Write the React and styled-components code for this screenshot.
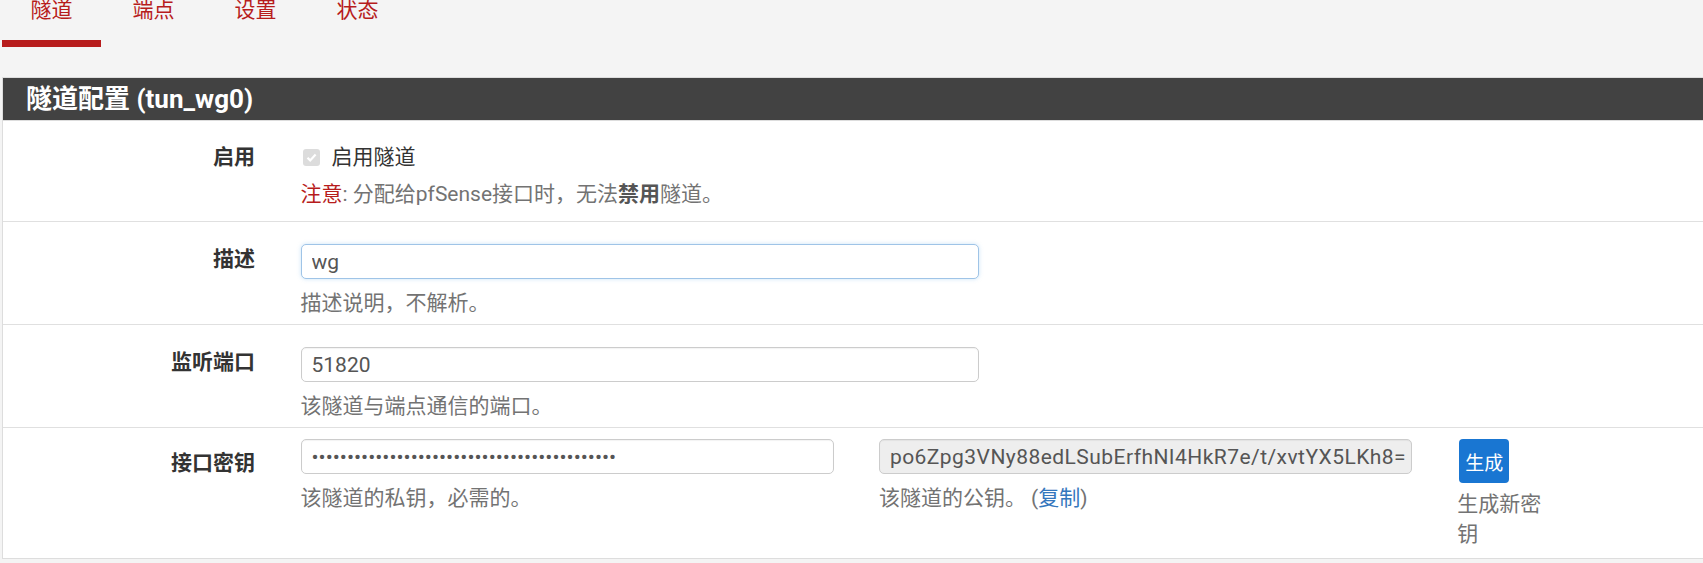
import React from 'react';
import styled, { createGlobalStyle } from 'styled-components';

const GlobalStyle = createGlobalStyle`
  html, body {
    margin: 0;
    padding: 0;
    background: #f4f4f4;
    overflow: hidden;
  }
  body {
    font-family: Roboto, "Noto Sans CJK SC", sans-serif;
    font-size: 21px;
    line-height: 30px;
    color: #333;
  }
`;

const COL = 144.6;

const Page = styled.div`
  padding-left: 2px;
`;

const Tabs = styled.ul`
  display: flex;
  margin: -5px 0 0;
  padding: 0;
  list-style: none;
`;

const Tab = styled.li`
  padding: 0 28.5px 15px;
  margin-right: 3px;
  line-height: 30px;
  color: #b71c1c;
  border-bottom: 7px solid ${props => (props.$active ? '#b71c1c' : 'transparent')};
  cursor: pointer;
`;

const Panel = styled.div`
  margin-top: 30px;
  width: 1780px;
  background: #fff;
  border: 1px solid #ddd;
  box-shadow: 0 6px 0 #e6e6e6;
`;

const PanelHeading = styled.div`
  display: flex;
  align-items: center;
  height: 42px;
  padding-left: 23px;
  background: #424242;
  border-bottom: 1px solid #ddd;

  h2 {
    margin: 0;
    font-size: 26px;
    font-weight: 700;
    color: #fff;
    line-height: 30px;
  }
`;

const Row = styled.div`
  display: flex;
  align-items: flex-start;
  padding-top: ${props => props.$top}px;
  padding-bottom: ${props => props.$bottom}px;
  border-bottom: ${props => (props.$last ? 'none' : '1px solid #e0e0e0')};
`;

const Label = styled.div`
  flex: 0 0 275px;
  box-sizing: border-box;
  padding-right: 23px;
  margin-top: ${props => props.$offset || 0}px;
  text-align: right;
  font-weight: 700;
  color: #333;
`;

const Field = styled.div`
  flex: 0 0 ${props => props.$span * COL}px;
  box-sizing: border-box;
  padding: 0 22.5px;
`;

const Input = styled.input`
  display: block;
  width: 100%;
  height: 35px;
  box-sizing: border-box;
  padding: 0 3px 0 10px;
  font-family: Roboto, "Noto Sans CJK SC", sans-serif;
  font-size: 21px;
  letter-spacing: ${props => (props.$wide ? '0.45px' : '0')};
  color: #555;
  background: ${props => (props.$wide ? '#eee' : '#fff')};
  border: 1px solid ${props => (props.$focused ? '#9fc4e7' : '#ccc')};
  border-radius: 5px;
  box-shadow: ${props =>
    props.$focused ? '0 0 4px rgba(102, 175, 233, 0.35)' : 'inset 0 1px 1px rgba(0, 0, 0, 0.05)'};
  outline: none;
`;

const Help = styled.div`
  margin-top: ${props => (props.$gap !== undefined ? props.$gap : 9)}px;
  color: #737373;

  .danger {
    color: #b71c1c;
  }

  b {
    color: #555;
  }

  a {
    color: #3577bd;
    text-decoration: none;
  }
`;

const CheckLine = styled.label`
  display: flex;
  align-items: center;
  color: #333;
`;

const CheckBox = styled.span`
  display: inline-flex;
  align-items: center;
  justify-content: center;
  width: 17px;
  height: 17px;
  margin: 0 12px 0 2px;
  background: #dcdcdc;
  border-radius: 3px;
`;

const Button = styled.button`
  display: block;
  height: 44px;
  margin-left: 2px;
  padding: 0 6px;
  font-family: Roboto, "Noto Sans CJK SC", sans-serif;
  font-size: 19px;
  color: #fff;
  background: #1976d2;
  border: none;
  border-radius: 4px;
  cursor: pointer;
`;

function App() {
  return (
    <Page>
      <GlobalStyle />
      <Tabs>
        <Tab $active>隧道</Tab>
        <Tab>端点</Tab>
        <Tab>设置</Tab>
        <Tab>状态</Tab>
      </Tabs>

      <Panel>
        <PanelHeading>
          <h2>隧道配置 (tun_wg0)</h2>
        </PanelHeading>

        <Row $top={21} $bottom={12}>
          <Label>启用</Label>
          <Field $span={8}>
            <CheckLine>
              <CheckBox>
                <svg width="13" height="13" viewBox="0 0 13 13">
                  <path d="M2.5 6.8 L5.2 9.4 L10.6 3.6" fill="none" stroke="#fff" strokeWidth="2.2" />
                </svg>
              </CheckBox>
              启用隧道
            </CheckLine>
            <Help $gap={7}>
              <span className="danger">注意</span>: 分配给pfSense接口时，无法<b>禁用</b>隧道。
            </Help>
          </Field>
        </Row>

        <Row $top={22} $bottom={6}>
          <Label>描述</Label>
          <Field $span={5}>
            <Input defaultValue="wg" $focused />
            <Help>描述说明，不解析。</Help>
          </Field>
        </Row>

        <Row $top={22} $bottom={6}>
          <Label>监听端口</Label>
          <Field $span={5}>
            <Input defaultValue="51820" />
            <Help>该隧道与端点通信的端口。</Help>
          </Field>
        </Row>

        <Row $top={11} $bottom={9} $last>
          <Label $offset={9}>接口密钥</Label>
          <Field $span={4}>
            <Input type="password" readOnly defaultValue="oKp2yXk1QmV7rT9sLwE3nH6uJ0aZcB4dF8gI5hN2pO=" />
            <Help>该隧道的私钥，必需的。</Help>
          </Field>
          <Field $span={4}>
            <Input readOnly $wide defaultValue="po6Zpg3VNy88edLSubErfhNI4HkR7e/t/xvtYX5LKh8=" />
            <Help>
              该隧道的公钥。 (<a href="#">复制</a>)
            </Help>
          </Field>
          <Field $span={1}>
            <Button>生成</Button>
            <Help $gap={6}>生成新密钥</Help>
          </Field>
        </Row>
      </Panel>
    </Page>
  );
}

export default App;
